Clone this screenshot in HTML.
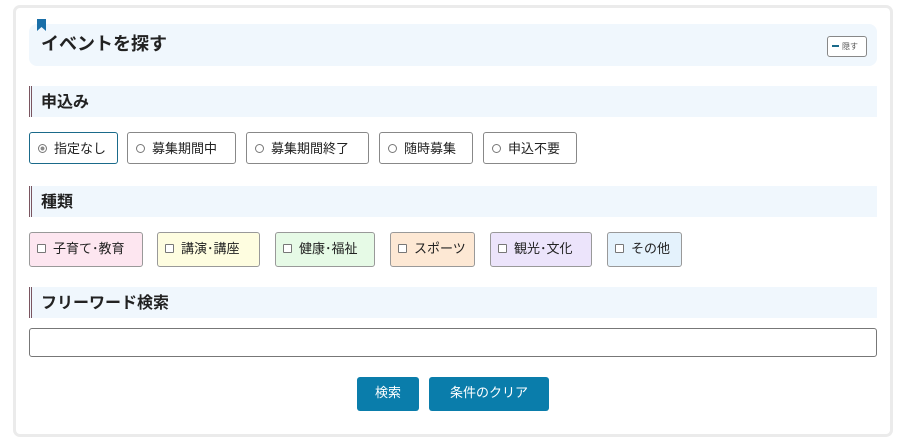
<!DOCTYPE html>
<html><head><meta charset="utf-8"><style>
*{box-sizing:border-box;margin:0;padding:0}
body{width:898px;height:445px;background:#fff;position:relative;overflow:hidden;font-family:"Liberation Sans","Noto Sans CJK JP",sans-serif;color:#222}
.a{position:absolute}
.card{left:13px;top:5px;width:880px;height:432px;border:3px solid #ebebeb;border-radius:7px}
.title{left:29px;top:24px;width:848px;height:42px;background:#f0f7fd;border-radius:8px}
.title span{position:absolute;left:12px;top:6px;font-size:18px;font-weight:bold;color:#222}
.hide{left:827px;top:36px;width:40px;height:21px;border:1px solid #888;border-radius:3px;background:#fff;font-size:8px;color:#555}
.hide i{position:absolute;left:4px;top:8px;width:7px;height:2px;background:#1a6a8a}
.hide b{position:absolute;left:14px;top:4px;font-weight:normal}
.sec{left:29px;width:848px;height:31px;background:#f0f7fd;border-left:3px double #7a5560}
.sec span{position:absolute;left:9px;top:2px;font-size:16px;font-weight:bold}
.r{top:132px;height:32px;border:1px solid #888;border-radius:3px;background:#fff;font-size:13px}
.r span{position:absolute;left:24px;top:5px}
.r i{position:absolute;left:8px;top:11px;width:9px;height:9px;border:1px solid #777;border-radius:50%}
.c{top:232px;height:35px;border:1px solid #999;border-radius:3px;font-size:13px}
.c span{position:absolute;left:23px;top:5px}
.c i{position:absolute;left:7px;top:11px;width:9px;height:9px;border:1px solid #777;border-radius:1px;background:#fff}
.btn{top:377px;height:34px;background:#0a7dab;color:#fff;border-radius:3px;font-size:13px;text-align:center;line-height:32px}
</style></head><body>
<div class="a card"></div>
<div class="a title"><span>イベントを探す</span></div>
<svg class="a" style="left:37px;top:19px" width="9" height="12"><path d="M0 0H9V12L4.5 8L0 12Z" fill="#1a6fa8"/></svg>
<div class="a hide"><i></i><b>隠す</b></div>

<div class="a sec" style="top:86px"><span>申込み</span></div>
<div class="a r" style="left:29px;width:89px;border-color:#1a6a8a"><i style="background:radial-gradient(circle,#888 35%,#fff 45%)"></i><span>指定なし</span></div>
<div class="a r" style="left:127px;width:109px"><i></i><span>募集期間中</span></div>
<div class="a r" style="left:246px;width:123px"><i></i><span>募集期間終了</span></div>
<div class="a r" style="left:379px;width:94px"><i></i><span>随時募集</span></div>
<div class="a r" style="left:483px;width:94px"><i></i><span>申込不要</span></div>

<div class="a sec" style="top:186px"><span>種類</span></div>
<div class="a c" style="left:29px;width:114px;background:#fde6f0"><i></i><span>子育て･教育</span></div>
<div class="a c" style="left:157px;width:103px;background:#fefde0"><i></i><span>講演･講座</span></div>
<div class="a c" style="left:275px;width:100px;background:#e6fae6"><i></i><span>健康･福祉</span></div>
<div class="a c" style="left:390px;width:85px;background:#fde8d4"><i></i><span>スポーツ</span></div>
<div class="a c" style="left:490px;width:102px;background:#ece4fb"><i></i><span>観光･文化</span></div>
<div class="a c" style="left:607px;width:75px;background:#e4f2fc"><i></i><span>その他</span></div>

<div class="a sec" style="top:287px"><span>フリーワード検索</span></div>
<div class="a" style="left:29px;top:328px;width:848px;height:29px;border:1px solid #777;border-radius:3px"></div>

<div class="a btn" style="left:357px;width:62px">検索</div>
<div class="a btn" style="left:429px;width:120px">条件のクリア</div>
</body></html>
